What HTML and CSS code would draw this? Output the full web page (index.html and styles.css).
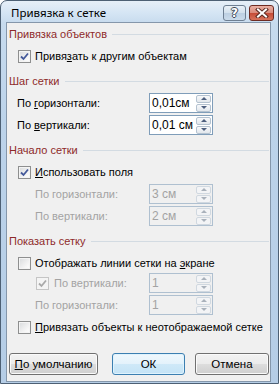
FILE: index.html
```html
<!DOCTYPE html>
<html lang="ru">
<head>
    <meta charset="UTF-8">
    <title>Привязка к сетке</title>
    <link rel="stylesheet" href="styles.css">
</head>
<body>
    <div class="window">
        <div class="titlebar">
            <span class="title">Привязка к сетке</span>
            <div class="caption-buttons">
                <span class="cap-btn help">?</span>
                <span class="cap-btn close">
                    <svg width="14" height="10" viewBox="0 0 14 10">
                        <path d="M3 1.5 L11 8.5 M11 1.5 L3 8.5" stroke="#5a2a22" stroke-width="4" stroke-linecap="square"/>
                        <path d="M3 1.5 L11 8.5 M11 1.5 L3 8.5" stroke="#ffffff" stroke-width="2" stroke-linecap="square"/>
                    </svg>
                </span>
            </div>
        </div>

        <div class="client">
            <!-- Привязка объектов -->
            <section class="group">
                <div class="group-title"><span>Привязка объектов</span></div>
                <div class="check-row">
                    <span class="box"><svg width="11" height="11" viewBox="0 0 11 11"><path d="M2 5.5 L4.5 8 L9 2.5" fill="none" stroke="#44599a" stroke-width="1.8"/></svg></span>
                    <span>Привя<u>з</u>ать к другим объектам</span>
                </div>
            </section>

            <!-- Шаг сетки -->
            <section class="group">
                <div class="group-title"><span>Шаг сетки</span></div>
                <div class="spin-row">
                    <span class="label">По <u>г</u>оризонтали:</span>
                    <div class="spin">
                        <span class="spin-value">0,01см</span>
                        <span class="spin-buttons"><span class="up"></span><span class="down"></span></span>
                    </div>
                </div>
                <div class="spin-row">
                    <span class="label">По <u>в</u>ертикали:</span>
                    <div class="spin">
                        <span class="spin-value">0,01 см</span>
                        <span class="spin-buttons"><span class="up"></span><span class="down"></span></span>
                    </div>
                </div>
            </section>

            <!-- Начало сетки -->
            <section class="group">
                <div class="group-title"><span>Начало сетки</span></div>
                <div class="check-row">
                    <span class="box"><svg width="11" height="11" viewBox="0 0 11 11"><path d="M2 5.5 L4.5 8 L9 2.5" fill="none" stroke="#44599a" stroke-width="1.8"/></svg></span>
                    <span><u>И</u>спользовать поля</span>
                </div>
                <div class="spin-row disabled">
                    <span class="label sub">По горизонтали:</span>
                    <div class="spin">
                        <span class="spin-value">3 см</span>
                        <span class="spin-buttons"><span class="up"></span><span class="down"></span></span>
                    </div>
                </div>
                <div class="spin-row disabled">
                    <span class="label sub">По вертикали:</span>
                    <div class="spin">
                        <span class="spin-value">2 см</span>
                        <span class="spin-buttons"><span class="up"></span><span class="down"></span></span>
                    </div>
                </div>
            </section>

            <!-- Показать сетку -->
            <section class="group">
                <div class="group-title"><span>Показать сетку</span></div>
                <div class="check-row">
                    <span class="box"></span>
                    <span>Отображать линии сетки на <u>э</u>кране</span>
                </div>
                <div class="spin-row disabled tight">
                    <span class="label sub-check">
                        <span class="box"><svg width="11" height="11" viewBox="0 0 11 11"><path d="M2 5.5 L4.5 8 L9 2.5" fill="none" stroke="#a9a9a9" stroke-width="1.8"/></svg></span>
                        По вертикали:
                    </span>
                    <div class="spin">
                        <span class="spin-value">1</span>
                        <span class="spin-buttons"><span class="up"></span><span class="down"></span></span>
                    </div>
                </div>
                <div class="spin-row disabled">
                    <span class="label sub">По горизонтали:</span>
                    <div class="spin">
                        <span class="spin-value">1</span>
                        <span class="spin-buttons"><span class="up"></span><span class="down"></span></span>
                    </div>
                </div>
                <div class="check-row">
                    <span class="box"></span>
                    <span><u>П</u>ривязать объекты к неотображаемой сетке</span>
                </div>
            </section>

            <div class="actions">
                <button class="btn btn-reset"><u>П</u>о умолчанию</button>
                <button class="btn btn-ok">ОК</button>
                <button class="btn btn-cancel">Отмена</button>
            </div>
        </div>
    </div>
</body>
</html>
```

FILE: styles.css
```css
body {
    margin: 0;
    overflow: hidden;
    font-family: "Liberation Sans", Arial, sans-serif;
    font-size: 11px;
    color: #000;
}

u {
    text-decoration: underline;
    text-underline-offset: 1px;
}

.window {
    width: 279px;
    height: 384px;
    box-sizing: border-box;
    border: 1px solid #4d6074;
    border-radius: 7px 7px 0 0;
    padding: 0 7px 1px 5px;
    display: flex;
    flex-direction: column;
    background: linear-gradient(to bottom, #e6eff8 0, #d5e5f4 12px, #c7dbee 22px, #bcd3ea 120px, #b5cde6 100%);
}

/* Title bar */
.titlebar {
    height: 21px;
    display: flex;
    align-items: center;
    justify-content: space-between;
}

.title {
    font-family: "Noto Sans", sans-serif;
    font-size: 11.5px;
    padding-left: 5px;
    padding-top: 1px;
}

.caption-buttons {
    display: flex;
    gap: 3px;
    margin-right: -3px;
    margin-top: 3px;
}

.cap-btn {
    height: 16px;
    box-sizing: border-box;
    border-radius: 3px;
    display: flex;
    align-items: center;
    justify-content: center;
}

.help {
    width: 23px;
    border: 1px solid #6e7f92;
    background: linear-gradient(to bottom, #e9f1f8 0, #d2e0ed 50%, #bccfe2 50%, #cadbeb 100%);
    color: #fff;
    font-family: "DejaVu Sans", sans-serif;
    font-weight: bold;
    font-size: 12px;
    text-shadow: 1px 0 0 #3d4a58, -1px 0 0 #3d4a58, 0 1px 0 #3d4a58, 0 -1px 0 #3d4a58;
}

.close {
    width: 25px;
    border: 1px solid #6e2b22;
    background: linear-gradient(to bottom, #e9b0a4 0, #d98a7a 50%, #c54a35 50%, #d7735c 100%);
}

/* Client area */
.client {
    flex: 1;
    background: #f0f0f0;
    border: 1px solid #8597ab;
    padding: 1px 1px 0 2px;
    display: flex;
    flex-direction: column;
}

.group {
    display: flex;
    flex-direction: column;
    gap: 2px;
    margin-top: 5px;
}

.group:first-child {
    margin-top: 0;
}

.group-title {
    height: 20px;
    display: flex;
    align-items: center;
    color: #8e2a2a;
}

.group-title::after {
    content: "";
    flex: 1;
    border-top: 1px solid #d3dbe2;
    margin-left: 5px;
    margin-top: 1px;
}

.check-row {
    height: 20px;
    display: flex;
    align-items: center;
    gap: 4px;
    padding-left: 9px;
}

.box {
    width: 13px;
    height: 13px;
    box-sizing: border-box;
    border: 1px solid #8e8f8f;
    background: linear-gradient(135deg, #d8dadc 0, #f6f6f6 70%, #ffffff 100%);
    box-shadow: inset 0 0 0 1px #f4f4f4;
    display: flex;
    align-items: center;
    justify-content: center;
    flex: none;
}

.spin-row {
    height: 20px;
    display: grid;
    grid-template-columns: 140px 64px;
    align-items: center;
}

.spin-row.tight {
    margin-top: -2px;
}

.label {
    padding-left: 8px;
}

.label.sub {
    padding-left: 26px;
}

.label.sub-check {
    padding-left: 27px;
    display: flex;
    align-items: center;
    gap: 5px;
}

.spin {
    height: 20px;
    box-sizing: border-box;
    border: 1px solid #7f9db9;
    background: #fff;
    display: flex;
    align-items: center;
}

.spin-value {
    flex: 1;
    padding-left: 2px;
    font-size: 12px;
}

.spin-buttons {
    width: 15px;
    display: flex;
    flex-direction: column;
    gap: 1px;
    margin-right: 1px;
}

.spin-buttons span {
    height: 8px;
    box-sizing: border-box;
    border: 1px solid #b4c2d0;
    border-radius: 2px;
    background: linear-gradient(to bottom, #f8f9fb, #e2e7ec);
    display: flex;
    align-items: center;
    justify-content: center;
}

.spin-buttons .up::before {
    content: "";
    border-left: 3px solid transparent;
    border-right: 3px solid transparent;
    border-bottom: 3px solid #4d5f7e;
}

.spin-buttons .down::before {
    content: "";
    border-left: 3px solid transparent;
    border-right: 3px solid transparent;
    border-top: 3px solid #4d5f7e;
}

/* Disabled rows */
.disabled {
    color: #a3a3a3;
}

.disabled .spin {
    background: #f0f0f0;
    border-color: #afc0d0;
}

.disabled .box {
    border-color: #c5c5c5;
    background: #f4f4f4;
}

.disabled .spin-buttons span {
    border-color: #d0d8e0;
    background: #f3f4f6;
}

.disabled .spin-buttons .up::before {
    border-bottom-color: #a9b1bb;
}

.disabled .spin-buttons .down::before {
    border-top-color: #a9b1bb;
}

/* Buttons */
.actions {
    display: flex;
    margin-top: 16px;
}

.btn {
    height: 22px;
    font-family: "Liberation Sans", Arial, sans-serif;
    font-size: 11.5px;
    color: #000;
    border: 1px solid #707070;
    border-radius: 3px;
    background: linear-gradient(to bottom, #f2f2f2 0, #ebebeb 50%, #dddddd 50%, #cfcfcf 100%);
    box-shadow: inset 0 0 0 1px #fafafa;
    padding: 0;
}

.btn-reset {
    width: 89px;
}

.btn-ok {
    width: 73px;
    margin-left: 14px;
    border-color: #3c7fb1;
    background: linear-gradient(to bottom, #f0f8fd 0, #e3f2fb 50%, #cfe9f8 50%, #c4e3f6 100%);
    box-shadow: inset 0 0 0 1px #dff3fd;
}

.btn-cancel {
    width: 74px;
    margin-left: 10px;
}
```
